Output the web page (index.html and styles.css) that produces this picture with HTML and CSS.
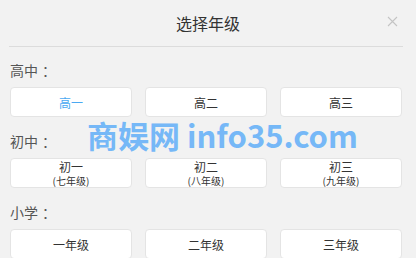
FILE: index.html
```html
<!DOCTYPE html>
<html lang="zh">
<head>
<meta charset="utf-8">
<link rel="stylesheet" href="styles.css">
</head>
<body>
<div class="dialog">
  <div class="header">
    <span class="title">选择年级</span>
    <span class="close">
      <svg width="11" height="11" viewBox="0 0 11 11"><path d="M1 1L10 10M10 1L1 10" stroke="#c4c4c4" stroke-width="1.1" fill="none"/></svg>
    </span>
  </div>
  <div class="divider"></div>
  <div class="content">
    <div class="label">高中<span class="colon">：</span></div>
    <div class="row">
      <div class="btn active">高一</div>
      <div class="btn">高二</div>
      <div class="btn">高三</div>
    </div>
    <div class="label">初中<span class="colon">：</span></div>
    <div class="row">
      <div class="btn two"><span class="main">初一</span><span class="sub">(七年级)</span></div>
      <div class="btn two"><span class="main">初二</span><span class="sub">(八年级)</span></div>
      <div class="btn two"><span class="main">初三</span><span class="sub">(九年级)</span></div>
    </div>
    <div class="label">小学<span class="colon">：</span></div>
    <div class="row">
      <div class="btn">一年级</div>
      <div class="btn">二年级</div>
      <div class="btn">三年级</div>
    </div>
  </div>
  <div class="watermark">商娱网 info35.com</div>
</div>
</body>
</html>
```
FILE: styles.css
```css
html, body {
  margin: 0;
  padding: 0;
  background: #f2f2f2;
  font-family: "Noto Sans CJK SC", "Noto Sans", sans-serif;
}
.dialog {
  position: relative;
  width: 416px;
  height: 258px;
  overflow: hidden;
  background: #f2f2f2;
}
.header {
  position: relative;
  height: 46px;
  display: flex;
  align-items: center;
  justify-content: center;
}
.title {
  font-size: 16px;
  color: #333;
  line-height: 20px;
}
.close {
  position: absolute;
  left: 387px;
  top: 16px;
  width: 11px;
  height: 11px;
  display: block;
}
.close svg { display: block; }
.divider {
  height: 1px;
  background: #dcdcdc;
  margin: 0 13px 0 9px;
}
.content {
  padding: 13px 14px 0 10px;
}
.label {
  font-size: 14px;
  line-height: 20px;
  color: #555;
  margin-bottom: 7px;
}
.colon {
  padding-left: 4px;
}
.row {
  display: grid;
  grid-template-columns: repeat(3, 1fr);
  column-gap: 13px;
  margin-bottom: 14px;
}
.btn {
  height: 30px;
  box-sizing: border-box;
  background: #fff;
  border: 1px solid #e4e4e4;
  border-radius: 4px;
  display: flex;
  align-items: center;
  justify-content: center;
  font-size: 12px;
  color: #333;
}
.btn.active { color: #4aa9f2; }
.btn.two {
  flex-direction: column;
  line-height: 14px;
}
.btn .main { font-size: 12px; line-height: 14px; }
.btn .sub { font-size: 10px; line-height: 13px; }
.watermark {
  position: absolute;
  left: 87px;
  top: 115px;
  font-size: 31px;
  font-weight: 700;
  line-height: 40px;
  color: #76b8f7;
  white-space: nowrap;
}
```
